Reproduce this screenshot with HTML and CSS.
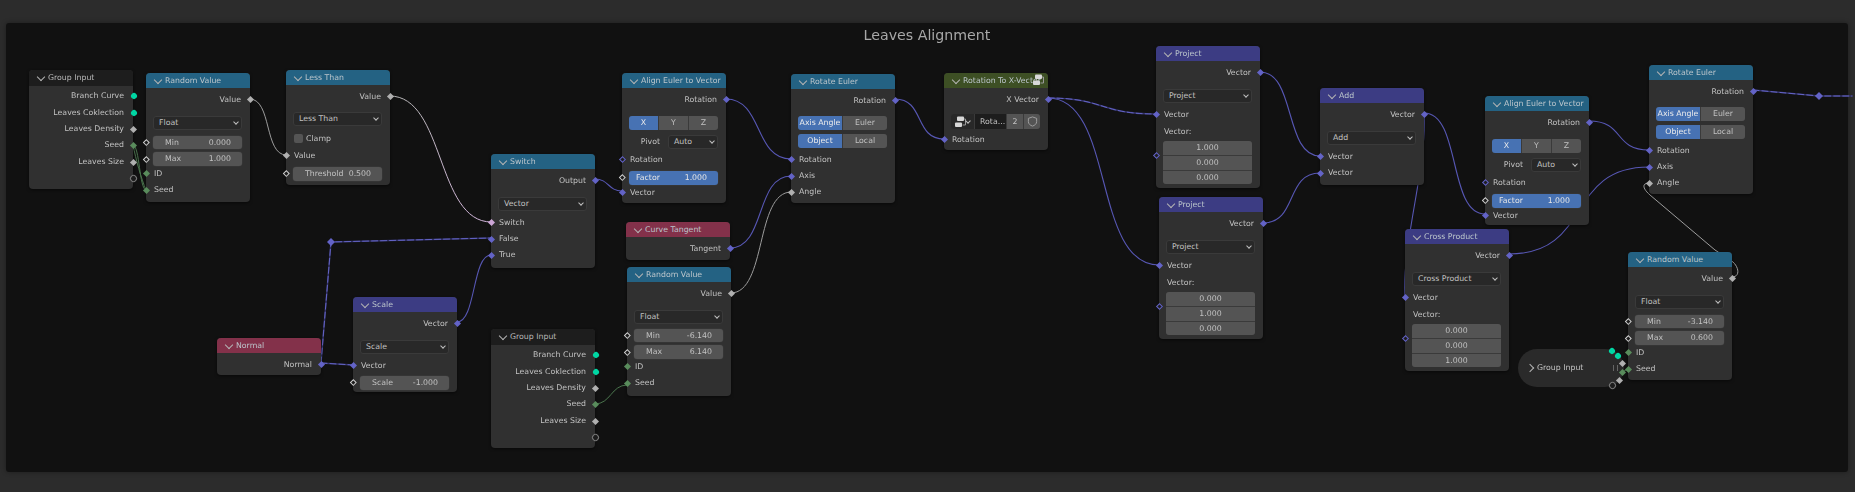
FILE: index.html
```html
<!DOCTYPE html>
<html lang="en">
<head>
<meta charset="utf-8">
<title>Leaves Alignment</title>
<link rel="stylesheet" href="styles.css">
</head>
<body>
<main class="canvas">
  <section class="frame"><h1 class="frame-title">Leaves Alignment</h1></section>

  <svg class="links" width="1855" height="492" viewBox="0 0 1855 492" aria-hidden="true">
    <defs>
      <linearGradient id="boolLink" gradientUnits="userSpaceOnUse" x1="390" y1="96" x2="491" y2="222">
        <stop offset="0" stop-color="#b5b5b5"/><stop offset="1" stop-color="#d3b6dc"/>
      </linearGradient>
    </defs>
    <path class="lk int" d="M133 145C140 145 139 190 146 190"/>
    <path class="lk int" d="M133 145C136 160 141 178 146 190"/>
    <path class="lk flt" d="M250 99C272 99 264 155 286 155"/>
    <path class="lk bool" d="M390 96C445 96 436 222 491 222"/>
    <path class="lk vecdk" d="M321 363L331 242L491 238"/>
    <path class="lk vecds" d="M321 363L331 242L491 238"/>
    <path class="lk vecdk" d="M321 363L353 365"/>
    <path class="lk vecds" d="M321 363L353 365"/>
    <path class="lk vec" d="M457 322C476 322 472 255 491 255"/>
    <path class="lk vec" d="M595 179C609 179 608 191 622 191"/>
    <path class="lk vec" d="M726 99C763 99 754 159 791 159"/>
    <path class="lk vec" d="M730 248C766 248 755 176 791 176"/>
    <path class="lk flt" d="M731 293C767 293 755 192 791 192"/>
    <path class="lk vec" d="M895 99C925 99 914 139 944 139"/>
    <path class="lk vecdk" d="M1048 98C1105 98 1099 114 1156 114"/>
    <path class="lk vecds" d="M1048 98C1105 98 1099 114 1156 114"/>
    <path class="lk vec" d="M1048 98C1115 98 1092 265 1159 265"/>
    <path class="lk vec" d="M1260 72C1296 72 1284 156 1320 156"/>
    <path class="lk vec" d="M1263 223C1298 223 1285 173 1320 173"/>
    <path class="lk vec" d="M1424 113C1461 113 1448 214 1485 214"/>
    <path class="lk vec" d="M1424 113C1427 170 1402 240 1405 297"/>
    <path class="lk vec" d="M1589 121C1625 121 1613 150 1649 150"/>
    <path class="lk vec" d="M1509 254C1593 254 1565 167 1649 167"/>
    <path class="lk flt" d="M1732 277C1742 277 1738 264 1730 260L1715 250L1650 195C1642 188 1642 183 1649 183"/>
    <path class="lk vecdk" d="M1753 90L1819 96L1852 96"/>
    <path class="lk vecds" d="M1753 90L1819 96L1852 96"/>
    <path class="lk int" d="M595 404C611 404 611 385 627 385"/>
    <path class="lk int" d="M1622 372L1628 369"/>
    <polygon class="reroute" points="331,238 335,242 331,246 327,242"/>
    <polygon class="reroute" points="1819,92 1823,96 1819,100 1815,96"/>
  </svg>

  <article class="node n-gi1">
    <header class="head dark">Group Input</header>
    <div class="gi-body">
      <div class="row out">Branch Curve<i class="s g o"></i></div>
      <div class="row out">Leaves Coklection<i class="s g o"></i></div>
      <div class="row out">Leaves Density<i class="s f o"></i></div>
      <div class="row out">Seed<i class="s n o"></i></div>
      <div class="row out">Leaves Size<i class="s f o"></i></div>
      <div class="row out"><i class="s e o"></i></div>
    </div>
  </article>

  <article class="node n-rv1">
    <header class="head blue">Random Value</header>
    <div class="body">
      <div class="row out">Value<i class="s f o"></i></div>
      <div class="line g8"><div class="menu">Float</div></div>
      <div class="line g6"><i class="s h l"></i><div class="num"><span>Min</span><span>0.000</span></div></div>
      <div class="line g3"><i class="s h l"></i><div class="num"><span>Max</span><span>1.000</span></div></div>
      <div class="row"><i class="s n l"></i>ID</div>
      <div class="row"><i class="s n l"></i>Seed</div>
    </div>
  </article>

  <article class="node n-lt">
    <header class="head blue">Less Than</header>
    <div class="body">
      <div class="row out">Value<i class="s f o"></i></div>
      <div class="line g7"><div class="menu">Less Than</div></div>
      <div class="line g8 check"><b class="box"></b>Clamp</div>
      <div class="row g5"><i class="s f l"></i>Value</div>
      <div class="line g3"><i class="s h l"></i><div class="num"><span>Threshold</span><span>0.500</span></div></div>
    </div>
  </article>

  <article class="node n-switch">
    <header class="head blue">Switch</header>
    <div class="body">
      <div class="row out">Output<i class="s v o"></i></div>
      <div class="line g8"><div class="menu">Vector</div></div>
      <div class="row g4"><i class="s b l"></i>Switch</div>
      <div class="row"><i class="s v l"></i>False</div>
      <div class="row"><i class="s v l"></i>True</div>
    </div>
  </article>

  <article class="node n-ae1">
    <header class="head blue">Align Euler to Vector</header>
    <div class="body">
      <div class="row out">Rotation<i class="s v o"></i></div>
      <div class="line g8"><div class="seg xyz"><span class="on">X</span><span>Y</span><span>Z</span></div></div>
      <div class="line g5 pivot"><span class="pivot-lab">Pivot</span><div class="menu">Auto</div></div>
      <div class="row g3"><i class="s hv l"></i>Rotation</div>
      <div class="line g3"><i class="s h l"></i><div class="num active"><span>Factor</span><span>1.000</span></div></div>
      <div class="row"><i class="s v l"></i>Vector</div>
    </div>
  </article>

  <article class="node n-ct">
    <header class="head pink">Curve Tangent</header>
    <div class="body">
      <div class="row out">Tangent<i class="s v o"></i></div>
    </div>
  </article>

  <article class="node n-rv2">
    <header class="head blue">Random Value</header>
    <div class="body">
      <div class="row out">Value<i class="s f o"></i></div>
      <div class="line g8"><div class="menu">Float</div></div>
      <div class="line g5"><i class="s h l"></i><div class="num"><span>Min</span><span>-6.140</span></div></div>
      <div class="line g3"><i class="s h l"></i><div class="num"><span>Max</span><span>6.140</span></div></div>
      <div class="row"><i class="s n l"></i>ID</div>
      <div class="row"><i class="s n l"></i>Seed</div>
    </div>
  </article>

  <article class="node n-re1">
    <header class="head blue">Rotate Euler</header>
    <div class="body">
      <div class="row out">Rotation<i class="s v o"></i></div>
      <div class="line g7"><div class="seg"><span class="on">Axis Angle</span><span>Euler</span></div></div>
      <div class="line g4"><div class="seg"><span class="on">Object</span><span>Local</span></div></div>
      <div class="row g4"><i class="s v l"></i>Rotation</div>
      <div class="row"><i class="s v l"></i>Axis</div>
      <div class="row"><i class="s f l"></i>Angle</div>
    </div>
  </article>

  <article class="node n-rx">
    <header class="head green">Rotation To X-Vector</header>
    <svg class="ico ico-head" viewBox="0 0 12 12" aria-hidden="true"><rect x="3" y="0.5" width="7" height="4.5" rx="1"/><rect x="1" y="6.5" width="7" height="4.5" rx="1"/><path d="M10 3H11.5V9H8.5"/></svg>
    <div class="body">
      <div class="row out">X Vector<i class="s v o"></i></div>
      <div class="line g6">
        <div class="block">
          <span class="b-ico"><svg class="ico" viewBox="0 0 12 12" aria-hidden="true"><rect x="3" y="0.5" width="7" height="4.5" rx="1"/><rect x="1" y="6.5" width="7" height="4.5" rx="1"/><path d="M10 3H11.5V9H8.5"/></svg></span>
          <span class="b-name">Rota...</span>
          <span class="b-num">2</span>
          <span class="b-num b-shield"><svg class="shield" viewBox="0 0 12 12" aria-hidden="true"><path d="M6 1L10.5 2.6V6.2C10.5 8.6 8.5 10.2 6 11C3.5 10.2 1.5 8.6 1.5 6.2V2.6Z"/></svg></span>
        </div>
      </div>
      <div class="row g3"><i class="s v l"></i>Rotation</div>
    </div>
  </article>

  <article class="node n-normal">
    <header class="head pink">Normal</header>
    <div class="body">
      <div class="row out">Normal<i class="s v o"></i></div>
    </div>
  </article>

  <article class="node n-scale">
    <header class="head purple">Scale</header>
    <div class="body">
      <div class="row out">Vector<i class="s v o"></i></div>
      <div class="line g8"><div class="menu">Scale</div></div>
      <div class="row g4"><i class="s v l"></i>Vector</div>
      <div class="line g2"><i class="s h l"></i><div class="num"><span>Scale</span><span>-1.000</span></div></div>
    </div>
  </article>

  <article class="node n-gi2">
    <header class="head dark">Group Input</header>
    <div class="gi-body">
      <div class="row out">Branch Curve<i class="s g o"></i></div>
      <div class="row out">Leaves Coklection<i class="s g o"></i></div>
      <div class="row out">Leaves Density<i class="s f o"></i></div>
      <div class="row out">Seed<i class="s n o"></i></div>
      <div class="row out">Leaves Size<i class="s f o"></i></div>
      <div class="row out"><i class="s e o"></i></div>
    </div>
  </article>

  <article class="node n-p1">
    <header class="head purple">Project</header>
    <div class="body">
      <div class="row out">Vector<i class="s v o"></i></div>
      <div class="line g8"><div class="menu">Project</div></div>
      <div class="row g4"><i class="s v l"></i>Vector</div>
      <div class="row g1">Vector:</div>
      <div class="line g1"><i class="s hv l top"></i><div class="vec"><span>1.000</span><span>0.000</span><span>0.000</span></div></div>
    </div>
  </article>

  <article class="node n-p2">
    <header class="head purple">Project</header>
    <div class="body">
      <div class="row out">Vector<i class="s v o"></i></div>
      <div class="line g8"><div class="menu">Project</div></div>
      <div class="row g4"><i class="s v l"></i>Vector</div>
      <div class="row g1">Vector:</div>
      <div class="line g1"><i class="s hv l top"></i><div class="vec"><span>0.000</span><span>1.000</span><span>0.000</span></div></div>
    </div>
  </article>

  <article class="node n-add">
    <header class="head purple">Add</header>
    <div class="body">
      <div class="row out">Vector<i class="s v o"></i></div>
      <div class="line g8"><div class="menu">Add</div></div>
      <div class="row g4"><i class="s v l"></i>Vector</div>
      <div class="row"><i class="s v l"></i>Vector</div>
    </div>
  </article>

  <article class="node n-cross">
    <header class="head purple">Cross Product</header>
    <div class="body">
      <div class="row out">Vector<i class="s v o"></i></div>
      <div class="line g8"><div class="menu">Cross Product</div></div>
      <div class="row g4"><i class="s v l"></i>Vector</div>
      <div class="row g1">Vector:</div>
      <div class="line g1"><i class="s hv l top"></i><div class="vec"><span>0.000</span><span>0.000</span><span>1.000</span></div></div>
    </div>
  </article>

  <article class="node n-ae2">
    <header class="head blue">Align Euler to Vector</header>
    <div class="body">
      <div class="row out">Rotation<i class="s v o"></i></div>
      <div class="line g8"><div class="seg xyz"><span class="on">X</span><span>Y</span><span>Z</span></div></div>
      <div class="line g5 pivot"><span class="pivot-lab">Pivot</span><div class="menu">Auto</div></div>
      <div class="row g3"><i class="s hv l"></i>Rotation</div>
      <div class="line g3"><i class="s h l"></i><div class="num active"><span>Factor</span><span>1.000</span></div></div>
      <div class="row"><i class="s v l"></i>Vector</div>
    </div>
  </article>

  <article class="node n-re2">
    <header class="head blue">Rotate Euler</header>
    <div class="body">
      <div class="row out">Rotation<i class="s v o"></i></div>
      <div class="line g7"><div class="seg"><span class="on">Axis Angle</span><span>Euler</span></div></div>
      <div class="line g4"><div class="seg"><span class="on">Object</span><span>Local</span></div></div>
      <div class="row g4"><i class="s v l"></i>Rotation</div>
      <div class="row"><i class="s v l"></i>Axis</div>
      <div class="row"><i class="s f l"></i>Angle</div>
    </div>
  </article>

  <article class="pill">
    <span class="pill-name">Group Input</span>
    <span class="pill-bars"></span>
    <i class="s g p1"></i><i class="s g p2"></i><i class="s f p3"></i><i class="s n p4"></i><i class="s f p5"></i><i class="s e p6"></i>
  </article>

  <article class="node n-rv3">
    <header class="head blue">Random Value</header>
    <div class="body">
      <div class="row out">Value<i class="s f o"></i></div>
      <div class="line g8"><div class="menu">Float</div></div>
      <div class="line g6"><i class="s h l"></i><div class="num"><span>Min</span><span>-3.140</span></div></div>
      <div class="line g3"><i class="s h l"></i><div class="num"><span>Max</span><span>0.600</span></div></div>
      <div class="row"><i class="s n l"></i>ID</div>
      <div class="row"><i class="s n l"></i>Seed</div>
    </div>
  </article>
</main>
</body>
</html>
```
FILE: styles.css
```css
* { box-sizing: border-box; }
html, body { margin: 0; padding: 0; }
body {
  width: 1855px;
  height: 492px;
  overflow: hidden;
  background: #2c2c2c;
  font-family: "DejaVu Sans", sans-serif;
  font-size: 7.8px;
  color: #c2c2c2;
}
.canvas { position: relative; width: 1855px; height: 492px; padding: 23px 7px 20px 6px; filter: blur(0.3px); }
.frame {
  height: 449px;
  background: #111111;
  border-radius: 3px;
  box-shadow: 0 0 5px rgba(0, 0, 0, .35);
}
.frame-title {
  margin: 0;
  padding-top: 3px;
  font-size: 14.2px;
  line-height: 18px;
  font-weight: 400;
  text-align: center;
  color: #a8a8a8;
}

.links { position: absolute; left: 0; top: 0; }
.lk { fill: none; stroke-width: 1; stroke-linecap: round; }
.lk.int { stroke: #4a744d; }
.lk.flt { stroke: #9c9c9c; }
.lk.bool { stroke: url(#boolLink); }
.lk.vec { stroke: #5757b4; stroke-width: 1.1; }
.lk.vecdk { stroke: #33336a; stroke-width: 1.5; }
.lk.vecds { stroke: #6464c6; stroke-width: 1; stroke-dasharray: 6 3; }
.reroute { fill: #6363c7; }

/* Nodes on the free canvas */
.node {
  position: absolute;
  width: 104px;
  background: #303030;
  border-radius: 4px;
  box-shadow: 0 1px 3px rgba(0, 0, 0, .55);
}
.n-gi1 { left: 29px; top: 70px; height: 119px; }
.n-rv1 { left: 146px; top: 73px; height: 129px; }
.n-lt { left: 286px; top: 70px; height: 115px; }
.n-switch { left: 491px; top: 154px; height: 114px; }
.n-ae1 { left: 622px; top: 73px; height: 130px; }
.n-ct { left: 626px; top: 222px; height: 38px; }
.n-rv2 { left: 627px; top: 267px; height: 129px; }
.n-re1 { left: 791px; top: 74px; height: 129px; }
.n-rx { left: 944px; top: 73px; height: 77px; }
.n-normal { left: 217px; top: 338px; height: 37px; }
.n-scale { left: 353px; top: 297px; height: 95px; }
.n-gi2 { left: 491px; top: 329px; height: 119px; }
.n-p1 { left: 1156px; top: 46px; height: 142px; }
.n-p2 { left: 1159px; top: 197px; height: 142px; }
.n-add { left: 1320px; top: 88px; height: 97px; }
.n-cross { left: 1405px; top: 229px; height: 142px; }
.n-ae2 { left: 1485px; top: 96px; height: 129px; }
.n-re2 { left: 1649px; top: 65px; height: 129px; }
.n-rv3 { left: 1628px; top: 252px; height: 128px; }

.head {
  position: relative;
  height: 15px;
  padding-left: 19px;
  line-height: 15px;
  border-radius: 4px 4px 0 0;
  color: #bcc6cc;
  white-space: nowrap;
  overflow: hidden;
}
.head::before {
  content: "";
  position: absolute;
  left: 8.5px;
  top: 3.5px;
  width: 5px;
  height: 5px;
  border-right: .8px solid #b4b4b4;
  border-bottom: .8px solid #b4b4b4;
  transform: rotate(45deg);
}
.head.dark { height: 16px; line-height: 16px; background: #1d1d1d; color: #b8b8b8; }
.head.blue { background: #246283; }
.head.pink { background: #83314a; }
.head.purple { background: #3c3c83; }
.head.green { background: #3d4f24; }

.body { padding-top: 3.5px; }
.gi-body { padding-top: 2.3px; }
.gi-body .row { height: 16.4px; line-height: 16.4px; }

.row {
  position: relative;
  height: 16.3px;
  line-height: 16.3px;
  padding: 0 9px 0 8px;
  white-space: nowrap;
}
.row.out { text-align: right; }
.line {
  position: relative;
  display: flex;
  align-items: center;
  padding: 0 8px 0 7px;
}
.g1 { margin-top: 1px; }
.g2 { margin-top: 2px; }
.g3 { margin-top: 3px; }
.g4 { margin-top: 4px; }
.g5 { margin-top: 5px; }
.g6 { margin-top: 6px; }
.g7 { margin-top: 7px; }
.g8 { margin-top: 8px; }

/* Widgets */
.menu {
  position: relative;
  flex: 1;
  height: 14px;
  line-height: 12px;
  padding-left: 5px;
  background: #282828;
  border: 1px solid #3a3a3a;
  border-radius: 3px;
  white-space: nowrap;
}
.menu::after {
  content: "";
  position: absolute;
  right: 3px;
  top: 3.5px;
  width: 3px;
  height: 3px;
  border-right: 1px solid #c0c0c0;
  border-bottom: 1px solid #c0c0c0;
  transform: rotate(45deg);
}
.num {
  flex: 1;
  display: flex;
  justify-content: space-between;
  height: 13.5px;
  line-height: 13.5px;
  padding: 0 11px 0 12px;
  background: #545454;
  border-radius: 3px;
  box-shadow: 0 0 0 .5px #3a3a3a;
  white-space: nowrap;
}
.num.active { padding-left: 7px; background: #4772b3; color: #e6e6e6; }
.seg {
  flex: 1;
  display: flex;
  height: 14px;
  line-height: 14px;
  border-radius: 3px;
  overflow: hidden;
  gap: 1px;
  background: #3a3a3a;
}
.seg span {
  flex: 1;
  text-align: center;
  background: #545454;
  white-space: nowrap;
}
.seg span.on { background: #4772b3; color: #ececec; }
.check { height: 9px; padding-left: 8px; }
.box {
  width: 9px;
  height: 9px;
  margin-right: 3px;
  background: #545454;
  border-radius: 2px;
}
.pivot .menu { flex: 0 0 50px; }
.pivot-lab { flex: 1; padding-right: 8px; text-align: right; }
.vec {
  flex: 1;
  display: flex;
  flex-direction: column;
  gap: 1px;
  border-radius: 3px;
  overflow: hidden;
  background: #3a3a3a;
}
.vec span {
  height: 13.7px;
  line-height: 13.7px;
  text-align: center;
  background: #545454;
}
.block {
  flex: 1;
  display: flex;
  height: 15px;
  line-height: 15px;
  border-radius: 3px;
  overflow: hidden;
  gap: 1px;
  background: #3a3a3a;
}
.b-ico {
  position: relative;
  flex: 0 0 23px;
  padding: 2px 0 0 3px;
  background: #282828;
}
.b-ico::after {
  content: "";
  position: absolute;
  right: 4px;
  top: 5px;
  width: 3px;
  height: 3px;
  border-right: 1px solid #c0c0c0;
  border-bottom: 1px solid #c0c0c0;
  transform: rotate(45deg);
}
.b-name { flex: 1; padding-left: 5px; background: #1d1d1d; white-space: nowrap; }
.b-num { flex: 0 0 16px; text-align: center; background: #545454; }
.ico { display: block; width: 12px; height: 12px; }
.ico rect { fill: #d8d8d8; }
.ico path { fill: none; stroke: #9a9a9a; stroke-width: 1; }
.ico-head { position: absolute; left: 88px; top: 1px; width: 12px; height: 12px; }
.b-shield { padding-top: 2px; }
.shield { display: block; width: 11px; height: 11px; margin: 0 auto; }
.shield path { fill: none; stroke: #a5a5a5; stroke-width: 1; }

/* Sockets */
.s {
  position: absolute;
  top: 50%;
  display: block;
  width: 5px;
  height: 5px;
  margin-top: -2.5px;
  transform: rotate(45deg);
}
.s.o { right: -2.5px; }
.s.l { left: -2.5px; }
.s.top { top: 14px; }
.s.f { background: #b0b0b0; }
.s.n { background: #598c5c; }
.s.v { background: #6363c7; }
.s.b { background: #cca6d6; }
.s.h { width: 4.6px; height: 4.6px; border: 1px solid #cfcfcf; background: #1e1e1e; }
.s.hv { border: 1px solid #6363c7; background: #1e1e1e; }
.s.g {
  width: 6px;
  height: 6px;
  margin-top: -3px;
  border-radius: 50%;
  background: #00d6a3;
}
.s.e {
  width: 7px;
  height: 7px;
  margin-top: -3.5px;
  border-radius: 50%;
  border: 1px solid #777;
  background: #1c1c1c;
}
.s.g.o, .s.e.o { right: -3.5px; }

/* Collapsed node */
.pill {
  position: absolute;
  left: 1518px;
  top: 349px;
  width: 106px;
  height: 38px;
  border-radius: 19px;
  background: #2a2a2a;
  line-height: 38px;
}
.pill::before {
  content: "";
  position: absolute;
  left: 9px;
  top: 16px;
  width: 5px;
  height: 5px;
  border-right: .8px solid #b4b4b4;
  border-top: .8px solid #b4b4b4;
  transform: rotate(45deg);
}
.pill-name { position: absolute; left: 19px; top: 0; white-space: nowrap; }
.pill-bars {
  position: absolute;
  left: 95px;
  top: 16px;
  width: 5px;
  height: 6px;
  border-left: 1.5px solid #666;
  border-right: 1.5px solid #666;
}
.p1 { left: 91px; top: 2px; }
.p2 { left: 97px; top: 7px; }
.p3 { left: 101.5px; top: 14px; }
.p4 { left: 101.5px; top: 23px; }
.p5 { left: 98.5px; top: 31px; }
.p6 { left: 90.5px; top: 36px; }
```
